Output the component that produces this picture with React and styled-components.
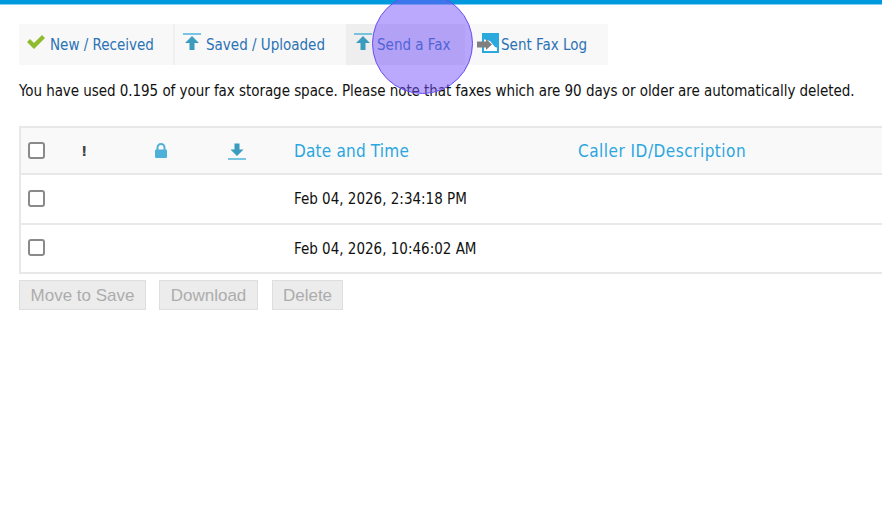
import React from "react";
import styled, { createGlobalStyle } from "styled-components";

const GlobalStyle = createGlobalStyle`
  html, body { margin: 0; padding: 0; background: #fff; }
  body { width: 882px; height: 525px; overflow: hidden; font-family: "DejaVu Sans Condensed", "DejaVu Sans", sans-serif; }
`;

const Page = styled.div`
  position: relative;
  width: 882px;
  height: 525px;
  overflow: hidden;
`;

const TopBar = styled.div`
  height: 4px;
  background: #0099dd;
  border-bottom: 1px solid #7fd0f0;
`;

const Content = styled.div`
  padding: 19px 0 0 19px;
`;

const Tabs = styled.nav`
  display: flex;
  width: 589px;
  height: 41px;
  background: #f8f8f8;
`;

const Tab = styled.a`
  display: flex;
  align-items: center;
  gap: ${p => p.$gap || 4}px;
  width: ${p => p.$width}px;
  box-sizing: border-box;
  padding-left: ${p => p.$pad}px;
  font-size: 15px;
  color: #2a72b5;
  background: ${p => (p.$active ? "#eeeeee" : "transparent")};
  border-right: ${p => (p.$divider ? "2px solid #f0f0f0" : "none")};

  svg {
    margin-bottom: ${p => p.$lift}px;
  }
`;

const Usage = styled.p`
  margin: 17px 0 0;
  font-size: 15px;
  letter-spacing: -0.05px;
  line-height: 18px;
  color: #111;
  white-space: nowrap;
`;

const Table = styled.div`
  margin-top: 26px;
  width: 900px;
  border: 2px solid #e8e8e8;
  box-sizing: border-box;
`;

const Row = styled.div`
  display: grid;
  grid-template-columns: 47px 77px 76px 73px 284px 1fr;
  align-items: center;
  height: ${p => p.$height}px;
  background: ${p => (p.$head ? "#f9f9f9" : "#fff")};
  border-top: ${p => (p.$first ? "none" : "2px solid #e8e8e8")};
  box-sizing: border-box;
`;

const Cell = styled.div`
  display: flex;
  align-items: center;
  font-size: 15px;
  color: #111;
`;

const IconCell = styled(Cell)`
  padding-left: ${p => p.$left}px;
`;

const HeadLabel = styled(Cell)`
  font-size: 17px;
  color: #2ba6e0;
  letter-spacing: ${p => p.$spacing}px;
`;

const Check = styled.span`
  display: block;
  width: 13px;
  height: 13px;
  margin: 0 0 ${p => (p.$raised ? 2 : 0)}px 7px;
  border: 2px solid #8a8a8a;
  border-radius: 3px;
  background: #fff;
`;

const Actions = styled.div`
  display: flex;
  margin-top: 6px;
`;

const ActionButton = styled.button`
  height: 30px;
  width: ${p => p.$width}px;
  margin-left: ${p => p.$gap || 0}px;
  padding: 2px 0 0;
  font-family: "Liberation Sans", Arial, sans-serif;
  font-size: 17px;
  color: #acacac;
  background: #ececec;
  border: 1px solid #dedede;
`;

const Pointer = styled.div`
  position: absolute;
  left: 372px;
  top: -7px;
  width: 99px;
  height: 99px;
  border: 1.5px solid #6a4cf5;
  border-radius: 50%;
  background: rgba(118, 84, 250, 0.5);
`;

const CheckIcon = () => (
  <svg width="18" height="14" viewBox="0 0 18 14">
    <path d="M0 7l3-3 4 4 8-8 3 3-11 11z" fill="#8fbc2f" />
  </svg>
);

const UploadIcon = () => (
  <svg width="18" height="18" viewBox="0 0 18 18">
    <path d="M0 1h18" stroke="#4fb3d9" strokeWidth="1.500" />
    <path d="M9 3l7 7h-4.500v7h-5v-7H2z" fill="#3b9cc0" />
  </svg>
);

const LogIcon = () => (
  <svg width="22" height="20" viewBox="0 0 22 20">
    <path d="M6 1h15v18H6z" fill="#fff" stroke="#29a9dc" strokeWidth="2" />
    <path d="M6 1h15v14l-3-1-5-6-7-2z" fill="#29a9dc" />
    <path d="M0 8.500h9V6l6 5.500-6 5.500v-2.500H0z" fill="#808080" />
  </svg>
);

const LockIcon = () => (
  <svg width="12" height="15" viewBox="0 0 12 15">
    <path d="M2.500 7V4.500a3.500 3.500 0 0 1 7 0V7" fill="none" stroke="#4fb0d8" strokeWidth="2" />
    <rect x="0" y="6.500" width="12" height="8.500" rx="1" fill="#4fb0d8" />
  </svg>
);

const DownloadIcon = () => (
  <svg width="18" height="18" viewBox="0 0 18 18">
    <path d="M6.500 1.500h5v6h4L9 14 2.500 7.500h4z" fill="#3b9cc0" />
    <path d="M0 17h18" stroke="#4fb3d9" strokeWidth="1.500" />
  </svg>
);

const Bang = styled.span`
  font-family: "DejaVu Sans", sans-serif;
  font-weight: 700;
  font-size: 14px;
  color: #444;
`;

const App = () => (
  <Page>
    <GlobalStyle />
    <TopBar />
    <Content>
      <Tabs>
        <Tab $width={156} $pad={8} $gap={5} $lift={5} $divider><CheckIcon />New / Received</Tab>
        <Tab $width={171} $pad={8} $gap={5} $lift={6}><UploadIcon />Saved / Uploaded</Tab>
        <Tab $width={119} $pad={8} $gap={5} $lift={6} $active><UploadIcon />Send a Fax</Tab>
        <Tab $width={143} $pad={12} $gap={2} $lift={4}><LogIcon />Sent Fax Log</Tab>
      </Tabs>
      <Usage>You have used 0.195 of your fax storage space. Please note that faxes which are 90 days or older are automatically deleted.</Usage>
      <Table>
        <Row $head $first $height={45}>
          <Cell><Check /></Cell>
          <IconCell $left={13}><Bang>!</Bang></IconCell>
          <IconCell $left={10}><LockIcon /></IconCell>
          <IconCell $left={7}><DownloadIcon /></IconCell>
          <HeadLabel $spacing={0.2}>Date and Time</HeadLabel>
          <HeadLabel $spacing={0.5}>Caller ID/Description</HeadLabel>
        </Row>
        <Row $height={50}>
          <Cell><Check $raised /></Cell><Cell /><Cell /><Cell />
          <Cell>Feb 04, 2026, 2:34:18 PM</Cell>
          <Cell />
        </Row>
        <Row $height={49}>
          <Cell><Check $raised /></Cell><Cell /><Cell /><Cell />
          <Cell>Feb 04, 2026, 10:46:02 AM</Cell>
          <Cell />
        </Row>
      </Table>
      <Actions>
        <ActionButton $width={127}>Move to Save</ActionButton>
        <ActionButton $width={99} $gap={13}>Download</ActionButton>
        <ActionButton $width={71} $gap={14}>Delete</ActionButton>
      </Actions>
    </Content>
    <Pointer />
  </Page>
);

export default App;
